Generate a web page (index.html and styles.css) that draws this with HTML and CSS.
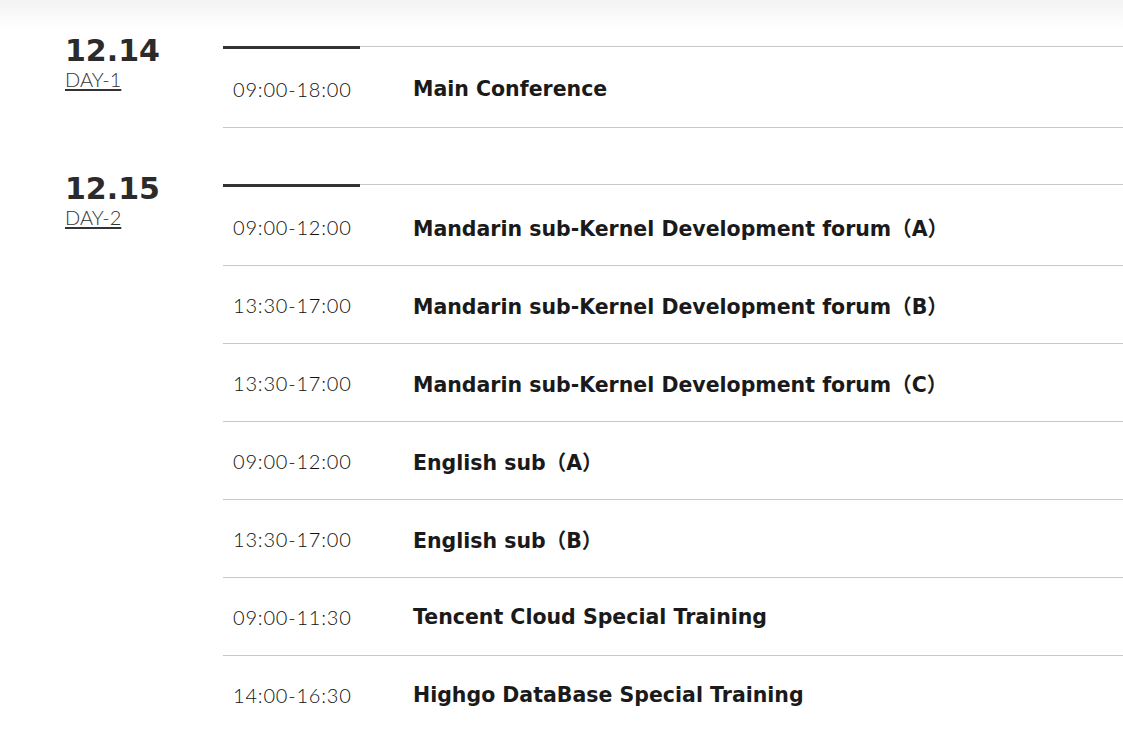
FILE: index.html
```html
<!DOCTYPE html>
<html lang="en">
<head>
<meta charset="utf-8">
<title>Schedule</title>
<link rel="stylesheet" href="styles.css">
</head>
<body>
<main class="schedule">
  <section class="day">
    <div class="day-head">
      <div class="day-date">12.14</div>
      <a class="day-label" href="#">DAY-1</a>
    </div>
    <ul class="sessions">
      <li class="session"><span class="time">09:00-18:00</span><span class="title">Main Conference</span></li>
    </ul>
  </section>
  <section class="day">
    <div class="day-head">
      <div class="day-date">12.15</div>
      <a class="day-label" href="#">DAY-2</a>
    </div>
    <ul class="sessions">
      <li class="session"><span class="time">09:00-12:00</span><span class="title">Mandarin sub-Kernel Development forum（A）</span></li>
      <li class="session"><span class="time">13:30-17:00</span><span class="title">Mandarin sub-Kernel Development forum（B）</span></li>
      <li class="session"><span class="time">13:30-17:00</span><span class="title">Mandarin sub-Kernel Development forum（C）</span></li>
      <li class="session"><span class="time">09:00-12:00</span><span class="title">English sub（A）</span></li>
      <li class="session"><span class="time">13:30-17:00</span><span class="title">English sub（B）</span></li>
      <li class="session"><span class="time">09:00-11:30</span><span class="title">Tencent Cloud Special Training</span></li>
      <li class="session"><span class="time">14:00-16:30</span><span class="title">Highgo DataBase Special Training</span></li>
    </ul>
  </section>
</main>
</body>
</html>
```
FILE: styles.css
```css
html {
  background: #fff linear-gradient(#f3f3f3, #ffffff 30px) no-repeat;
}
body {
  margin: 0;
  color: #333;
  font-family: "Liberation Sans", Arial, sans-serif;
}
.schedule {
  display: flex;
  flex-direction: column;
  gap: 56px;
  padding: 46px 0 0 65px;
}
.day {
  display: flex;
}
.day-head {
  width: 158px;
  flex: none;
  display: flex;
  flex-direction: column;
  align-items: flex-start;
  margin-top: -10px;
}
.day-date {
  font-family: "DejaVu Sans", Verdana, sans-serif;
  font-weight: 700;
  font-size: 30px;
  line-height: 30px;
  color: #2b2b2b;
}
.day-label {
  margin-top: 3px;
  font-family: Lato, "Open Sans", sans-serif;
  font-weight: 300;
  font-size: 20px;
  line-height: 20px;
  color: #333;
  text-decoration: underline;
  text-underline-offset: 2px;
}
.sessions {
  flex: 1;
  list-style: none;
  margin: 0;
  padding: 3px 0 0;
  border-top: 1px solid #c8c8c8;
  position: relative;
}
.sessions::before {
  content: "";
  position: absolute;
  left: 0;
  top: -1px;
  width: 137px;
  height: 3px;
  background: #333;
}
.session {
  display: flex;
  align-items: center;
  height: 77px;
  border-bottom: 1px solid #c8c8c8;
}
.time {
  width: 180px;
  flex: none;
  padding-left: 10px;
  font-family: Lato, "Open Sans", sans-serif;
  font-weight: 300;
  font-size: 20px;
  letter-spacing: 0.8px;
  color: #111;
}
.title {
  font-family: "DejaVu Sans", Verdana, "Noto Sans CJK SC", sans-serif;
  font-weight: 700;
  font-size: 20.5px;
  color: #1a1a1a;
}
```
